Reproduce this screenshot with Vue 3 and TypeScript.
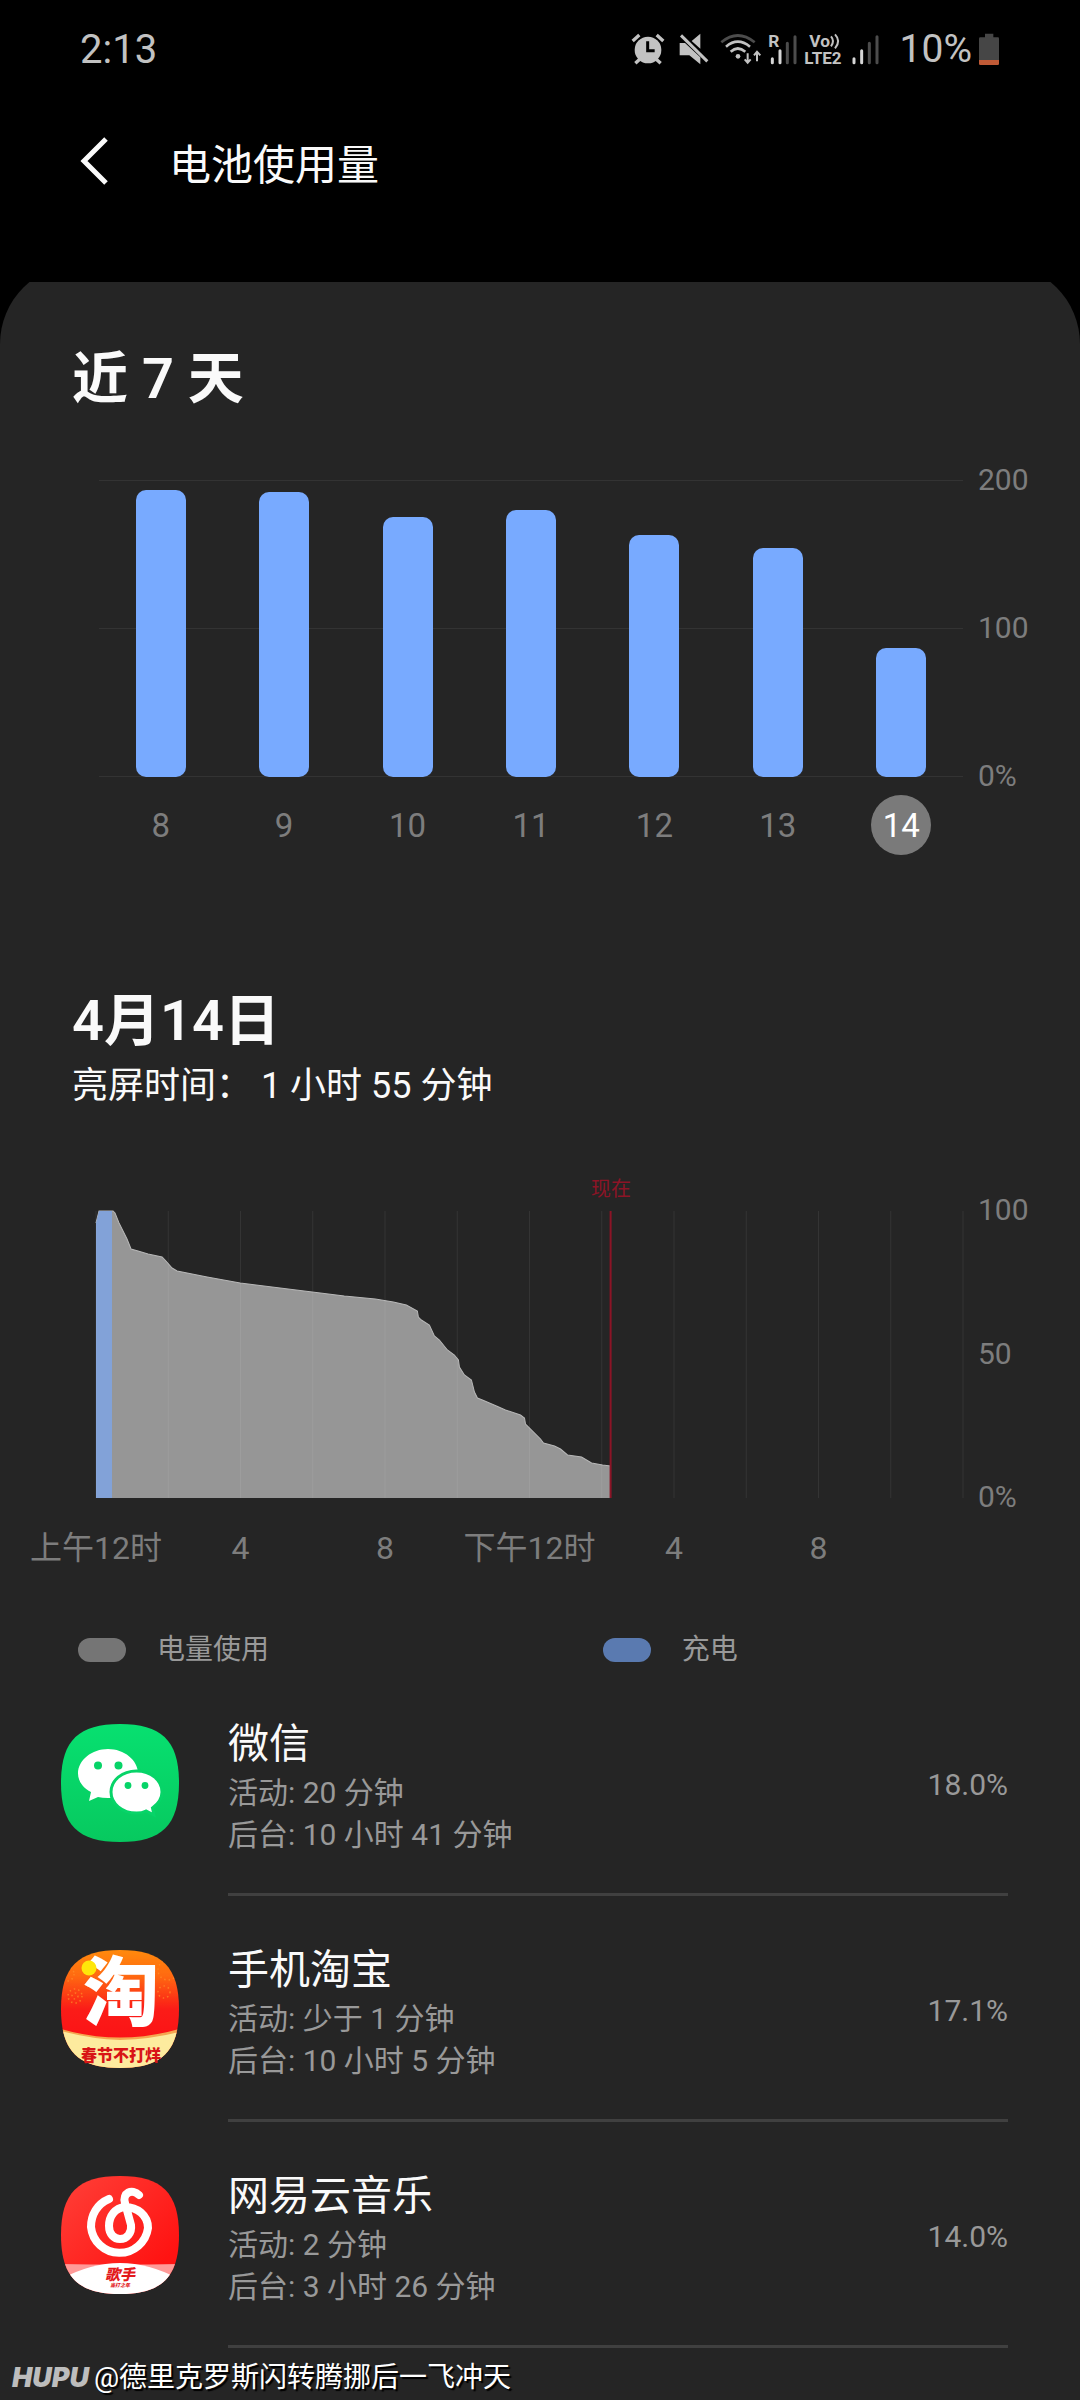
<script setup lang="ts">
import { ref } from 'vue'

interface Day { label: string; value: number }
interface AppUsage { id: string; name: string; active: string; background: string; share: string }

const days: Day[] = [
  { label: '8', value: 193 },
  { label: '9', value: 192 },
  { label: '10', value: 175 },
  { label: '11', value: 180 },
  { label: '12', value: 163 },
  { label: '13', value: 154 },
  { label: '14', value: 87 },
]
const selected = ref('14')

const hours: string[] = ['上午12时', '4', '8', '下午12时', '4', '8']
const hourLines: number[] = Array.from({ length: 13 }, (_, i) => (i * 866) / 12)

// Battery level over the day: x runs over 24 hours (0-866), y from full (0) to empty (287)
const level: [number, number][] = [
  [0, 12], [3, 0], [17, 0], [19, 2], [23, 12], [31, 28], [35, 38], [42, 40], [52, 43], [66, 46],
  [69, 49], [76, 57], [81, 60], [111, 66], [144, 72], [216, 81], [248, 85], [279, 88], [297, 91],
  [310, 94], [321, 100], [322, 106], [325, 109], [333, 114], [338, 125], [343, 129], [351, 139],
  [358, 144], [362, 149], [363, 156], [368, 164], [375, 169], [378, 181], [381, 187], [386, 189],
  [400, 195], [409, 199], [424, 204], [428, 207], [429, 213], [444, 228], [447, 232], [458, 235],
  [464, 238], [471, 244], [485, 246], [495, 252], [506, 254], [514, 255],
]
const linePoints = level.map((p) => p.join(',')).join(' ')
const areaPoints = `0,287 ${linePoints} 514,287`

const apps: AppUsage[] = [
  { id: 'wechat', name: '微信', active: '20 分钟', background: '10 小时 41 分钟', share: '18.0%' },
  { id: 'taobao', name: '手机淘宝', active: '少于 1 分钟', background: '10 小时 5 分钟', share: '17.1%' },
  { id: 'netease', name: '网易云音乐', active: '2 分钟', background: '3 小时 26 分钟', share: '14.0%' },
]
</script>

<template>
  <div class="screen">
    <header class="top">
      <div class="status">
        <span>2:13</span>
        <div class="status-icons">
          <svg class="i-alarm" viewBox="93 60 102 108" width="34" height="36" aria-hidden="true">
            <g fill="none" stroke="#c2c2c2" stroke-width="10">
              <path d="M98 90 L118 72 M170 72 L190 90 M120 144 L106 157 M168 144 L182 157" />
            </g>
            <circle cx="144" cy="117" r="40" fill="#c2c2c2" />
            <path d="M143 91 V119 H164" fill="none" stroke="#000" stroke-width="9" />
          </svg>
          <svg class="i-mute" viewBox="237 60 90 108" width="30" height="36" aria-hidden="true">
            <path d="M239 96 H255 L301 139 V160 L268 133 H239Z M275 90 L301 68 V113Z" fill="#c2c2c2" />
            <path d="M243 73 L322 151" stroke="#c2c2c2" stroke-width="9" />
          </svg>
          <svg viewBox="360 60 126 108" width="42" height="36" aria-hidden="true">
            <g fill="none" stroke-width="8">
              <path d="M364 94 Q413 53 464 94" stroke="#4c4c4c" />
              <path d="M378 107 Q413 77 450 107" stroke="#c2c2c2" />
              <path d="M392 122 Q413 103 436 122" stroke="#c2c2c2" />
              <path d="M443 127 V154 M434 145 L443 155 L452 145 M471 151 V124 M462 133 L471 122 L481 133" stroke="#c2c2c2" stroke-width="6" />
            </g>
            <circle cx="414" cy="136" r="7" fill="#c2c2c2" />
          </svg>
          <svg viewBox="510 60 90 108" width="30" height="36" aria-hidden="true">
            <text x="511" y="107" class="tag" font-size="52">R</text>
            <g stroke-width="9" stroke-linecap="round">
              <path d="M523 143 V155 M546 119 V155" stroke="#d6d6d6" />
              <path d="M568 97 V155 M591 77 V155" stroke="#4c4c4c" />
            </g>
          </svg>
          <svg viewBox="615 60 123 108" width="41" height="36" aria-hidden="true">
            <text x="631" y="108" class="tag" font-size="52">Vo</text>
            <text x="616" y="158" class="tag" font-size="51">LTE2</text>
            <path d="M696 76 Q708 90 696 106 M708 70 Q727 90 708 112" fill="none" stroke="#c2c2c2" stroke-width="6" />
          </svg>
          <svg viewBox="753 60 87 108" width="29" height="36" aria-hidden="true">
            <g stroke-width="9" stroke-linecap="round">
              <path d="M762 143 V155 M785 119 V155" stroke="#d6d6d6" />
              <path d="M808 97 V155 M831 77 V155" stroke="#4c4c4c" />
            </g>
          </svg>
          <span class="percent">10%</span>
          <svg viewBox="1134 60 66 108" width="22" height="36" aria-hidden="true">
            <path d="M1155 68 H1180 V79 H1194 Q1197 79 1197 83 V147 H1137 V83 Q1137 79 1141 79 H1155Z" fill="#464646" />
            <path d="M1137 147 H1197 V158 Q1197 162 1193 162 H1141 Q1137 162 1137 158Z" fill="#c05a36" />
          </svg>
        </div>
      </div>
      <div class="toolbar">
        <button class="back" type="button" aria-label="返回">
          <svg viewBox="0 0 28 48" width="28" height="48"><path d="M26 2 L4 24 L26 46" fill="none" stroke="#fafafa" stroke-width="5" /></svg>
        </button>
        <h1>电池使用量</h1>
      </div>
    </header>

    <main class="panel">
      <h2>近 7 天</h2>
      <section class="chart week">
        <div class="plot">
          <div class="bars">
            <div v-for="d in days" :key="d.label" class="slot">
              <div class="bar" :style="{ height: d.value / 2 + '%' }"></div>
            </div>
          </div>
          <div class="days">
            <button
              v-for="d in days"
              :key="d.label"
              type="button"
              class="day"
              :class="{ on: d.label === selected }"
              @click="selected = d.label"
            >{{ d.label }}</button>
          </div>
        </div>
        <div class="axis week-axis"><span>200</span><span>100</span><span>0%</span></div>
      </section>

      <h2 class="date">4月14日</h2>
      <p class="screen-time">亮屏时间： 1 小时 55 分钟</p>

      <section class="chart today">
        <div class="plot">
          <svg class="area" viewBox="0 0 866 287" preserveAspectRatio="none" aria-hidden="true">
            <polygon :points="areaPoints" fill="#969696" />
            <polyline :points="linePoints" fill="none" stroke="#b8b8b8" stroke-width="1" />
            <path d="M0 287 V12 L3 0 H16 V287Z" fill="#82a2d8" />
            <line v-for="x in hourLines" :key="x" :x1="x" :x2="x" y1="0" y2="287" stroke="#fff" stroke-opacity="0.07" />
            <line x1="514" x2="514" y1="0" y2="287" stroke="#8c1426" stroke-width="2" />
          </svg>
          <span class="now">现在</span>
          <div class="hours"><span v-for="(h, i) in hours" :key="i">{{ h }}</span></div>
        </div>
        <div class="axis today-axis"><span>100</span><span>50</span><span>0%</span></div>
      </section>

      <div class="legend">
        <span><i class="pill used"></i>电量使用</span>
        <span><i class="pill charge"></i>充电</span>
      </div>

      <ul class="apps">
        <li v-for="a in apps" :key="a.id">
          <svg class="logo" viewBox="0 0 118 118" width="118" height="118" aria-hidden="true">
            <defs>
              <clipPath :id="'clip-' + a.id">
                <path d="M59 0 C101 0 118 17 118 59 S101 118 59 118 S0 101 0 59 S17 0 59 0Z" />
              </clipPath>
              <linearGradient id="wechat-bg" x2="0" y2="1">
                <stop offset="0" stop-color="#07e070" /><stop offset="1" stop-color="#07c95f" />
              </linearGradient>
              <linearGradient id="taobao-bg" x2="0" y2="1">
                <stop offset="0" stop-color="#ff8a0c" /><stop offset=".22" stop-color="#ff6a12" />
                <stop offset=".5" stop-color="#fb1c18" /><stop offset="1" stop-color="#fb0a14" />
              </linearGradient>
              <linearGradient id="netease-bg" x2="1" y2="1">
                <stop offset="0" stop-color="#ff4038" /><stop offset=".8" stop-color="#ff1312" />
              </linearGradient>
            </defs>
            <g :clip-path="'url(#clip-' + a.id + ')'">
              <rect width="118" height="118" :fill="'url(#' + a.id + '-bg)'" />
              <template v-if="a.id === 'wechat'">
                <path d="M47 25 C63 25 77 36 77 49.500 S63 74 47 74 Q41 74 37 73 L28 77 L30 68 C22 64 17 57 17 49.500 C17 36 31 25 47 25Z" fill="#fff" />
                <path d="M75.500 47 C90 47 101 56.500 101 68 C101 75 97 80 91.500 84 L93 91 L85 87 Q81 89 75.500 89 C61 89 50 79.500 50 68 S61 47 75.500 47Z" fill="#fff" stroke="#07d468" stroke-width="3" />
                <g fill="#07d468">
                  <circle cx="37" cy="41.500" r="4" /><circle cx="57.500" cy="41.500" r="4" />
                  <circle cx="67" cy="61.500" r="3.400" /><circle cx="84" cy="61.500" r="3.400" />
                </g>
              </template>
              <template v-else-if="a.id === 'taobao'">
                <g fill="none" stroke="#ff8f2a" stroke-width="1.500" stroke-dasharray="1.500 3" opacity=".7">
                  <circle cx="14" cy="46" r="7" /><circle cx="14" cy="46" r="3" />
                  <circle cx="107" cy="20" r="10" /><circle cx="103" cy="42" r="6" /><circle cx="6" cy="24" r="7" />
                </g>
                <path d="M0 79 Q59 96 118 79 V118 H0Z" fill="#f5a650" />
                <path d="M0 81 Q30 89 59 90 Q92 89 118 82 V118 H0Z" fill="#fdeb9e" />
              </template>
              <template v-else>
                <path d="M48 23 C36 28 30 39 30 51 A28.700 28.700 0 0 0 87 52 C87 39 76 31 64 31 C54 32 48 40 48 50 C48 58 53 63 59 63 C66 63 71 57 70 49 L64 27 C61 17 71 12 78 19" fill="none" stroke="#fff" stroke-width="8" stroke-linecap="round" stroke-linejoin="round" />
                <path d="M0 88 Q59 89 118 88 V118 H0Z" fill="#ff9a98" />
                <path d="M0 103 Q30 87 59 87 T118 103 V118 H0Z" fill="#fff" />
                <text class="singer" x="59" y="104" text-anchor="middle" font-size="15">歌手</text>
                <text class="singer" x="59" y="111" text-anchor="middle" font-size="5">当打之年</text>
              </template>
            </g>
            <template v-if="a.id === 'taobao'">
              <text class="tao" x="60" y="70" text-anchor="middle" font-size="76">淘</text>
              <circle cx="28" cy="18" r="7.500" fill="#ffe60a" />
              <text class="festival" x="60" y="111" text-anchor="middle" font-size="16">春节不打烊</text>
            </template>
          </svg>
          <div class="row">
            <div class="info">
              <h3>{{ a.name }}</h3>
              <p>活动: {{ a.active }}</p>
              <p>后台: {{ a.background }}</p>
            </div>
            <span class="share">{{ a.share }}</span>
          </div>
        </li>
      </ul>
    </main>

    <div class="mark"><em>HUPU</em><span>@德里克罗斯闪转腾挪后一飞冲天</span></div>
  </div>
</template>

<style>
body { margin: 0; background: #252525; }
</style>

<style scoped>
* { box-sizing: border-box; }
.screen {
  position: relative;
  min-height: 100vh;
  background: linear-gradient(#000 400px, #252525 400px);
  color: #fafafa;
  font-family: Roboto, "Noto Sans CJK SC", sans-serif;
}
h1, h2, h3, p, ul { margin: 0; padding: 0; }
button { border: 0; padding: 0; background: none; color: inherit; font: inherit; cursor: pointer; }
.top { position: relative; z-index: 1; background: #000; padding-bottom: 58px; }
.status {
  height: 98px; padding: 0 80px;
  display: flex; justify-content: space-between; align-items: center;
  color: #c2c2c2; font-size: 40px;
}
.status-icons { display: flex; align-items: center; gap: 6px; }
.i-alarm { margin-right: 8px; }
.i-mute { margin-right: 5px; }
.percent { margin-left: 14px; font-size: 39px; }
.tag { font-family: Roboto, sans-serif; font-weight: 700; fill: #c2c2c2; }
.toolbar { height: 126px; padding-left: 80px; display: flex; align-items: center; gap: 61px; }
.back { display: flex; }
h1 { font-size: 42px; font-weight: 400; }

.panel {
  margin-top: -18px; padding: 83px 0 52px;
  background: #252525; border-radius: 80px 80px 0 0;
}
h2 { padding-left: 72px; font-size: 56px; line-height: 64px; font-weight: 600; }
.chart { display: flex; }
.plot { flex: 1; position: relative; }
.axis {
  width: 117px; padding-left: 15px; color: #7d7d7d;
  font-size: 30px; line-height: 36px;
  display: flex; flex-direction: column; justify-content: space-between;
}
.week { margin-top: 69px; padding-left: 99px; }
.week-axis { height: 332px; margin-top: -18px; }
.bars {
  height: 297px; display: flex;
  background:
    linear-gradient(#333, #333) top / 100% 1px no-repeat,
    linear-gradient(#333, #333) center / 100% 1px no-repeat,
    linear-gradient(#333, #333) bottom / 100% 1px no-repeat;
}
.slot { flex: 1; display: flex; align-items: flex-end; justify-content: center; }
.bar { width: 50px; border-radius: 10px; background: #78aaff; }
.days { display: flex; justify-content: space-around; margin-top: 18px; }
.day { width: 60px; height: 60px; padding-top: 2px; border-radius: 50%; color: #7d7d7d; font-size: 33px; line-height: 58px; }
.day.on { background: #7a7a7a; color: #fff; }

.date { margin-top: 134px; }
.screen-time { padding-left: 72px; margin-top: 9px; font-size: 36px; line-height: 48px; }
.today { margin-top: 101px; padding-left: 96px; }
.today-axis { height: 323px; margin-top: -19px; }
.area { display: block; width: 100%; height: 287px; overflow: visible; }
.now {
  position: absolute; left: 59.4%; top: -34px; transform: translateX(-50%);
  color: #8c1426; font-size: 20px; line-height: 24px;
}
.hours {
  margin: 26px calc(100% / 12) 0 calc(100% / -12);
  display: grid; grid-template-columns: repeat(6, 1fr);
  text-align: center; white-space: nowrap;
  color: #7d7d7d; font-size: 32px; line-height: 48px;
}
.legend {
  margin-top: 58px; padding-left: 78px;
  display: grid; grid-template-columns: 11fr 10fr;
  color: #999; font-size: 28px; line-height: 40px;
}
.legend span { display: flex; align-items: center; gap: 31px; }
.pill { width: 48px; height: 24px; border-radius: 12px; }
.used { background: #757575; }
.charge { background: #5a7ab0; }

.apps { list-style: none; }
li { display: flex; align-items: center; padding: 0 72px 0 61px; gap: 49px; }
.logo { flex: none; overflow: visible; }
.row {
  flex: 1; height: 226px; padding-bottom: 37px; border-bottom: 3px solid #404040;
  display: flex; align-items: flex-end; justify-content: space-between;
}
h3 { font-size: 41px; line-height: 56px; font-weight: 400; }
.info p, .share { font-size: 30px; line-height: 42px; color: #999; }
.share { margin-bottom: 50px; }
.tao, .festival, .singer { font-family: "Noto Sans CJK SC", sans-serif; font-weight: 900; }
.tao { fill: #fff; }
.festival { fill: #d81416; }
.singer { fill: #e3191c; font-style: italic; }

.mark {
  position: absolute; left: 12px; bottom: 6px;
  display: flex; align-items: center; gap: 5px;
  font-size: 28px; line-height: 32px;
  color: #fff; text-shadow: 2px 2px 1px #000; white-space: nowrap;
}
.mark em { font-family: Inter, sans-serif; font-weight: 900; font-size: 27px; color: #bdbdbd; text-shadow: none; }
</style>
